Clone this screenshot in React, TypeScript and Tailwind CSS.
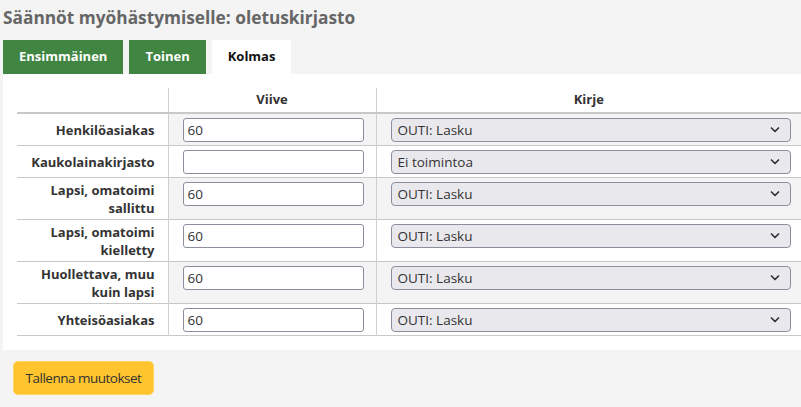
import React from "react";

const rows = [
  { label: ["Henkilöasiakas"], delay: "60", letter: "OUTI: Lasku" },
  { label: ["Kaukolainakirjasto"], delay: "", letter: "Ei toimintoa" },
  { label: ["Lapsi, omatoimi", "sallittu"], delay: "60", letter: "OUTI: Lasku" },
  { label: ["Lapsi, omatoimi", "kielletty"], delay: "60", letter: "OUTI: Lasku" },
  { label: ["Huollettava, muu", "kuin lapsi"], delay: "60", letter: "OUTI: Lasku" },
  { label: ["Yhteisöasiakas"], delay: "60", letter: "OUTI: Lasku" },
];

function Chevron() {
  return (
    <svg width="12" height="8" viewBox="0 0 12 8" fill="none">
      <path d="M2.5 2 L6 5.5 L9.5 2" stroke="#333" strokeWidth="1.7" strokeLinecap="round" strokeLinejoin="round" />
    </svg>
  );
}

export default function App() {
  return (
    <div
      className="w-[801px] h-[407px] bg-[#f3f4f3] overflow-hidden text-[13px] text-[#333]"
      style={{ fontFamily: '"Open Sans", "Noto Sans", sans-serif' }}
    >
      <h1 className="pl-[3px] pt-[5px] h-[40px] text-[17.3px] font-bold text-[#666] leading-[26px]">
        Säännöt myöhästymiselle: oletuskirjasto
      </h1>
      <div className="flex pl-[3px] gap-[6px] h-[34px] text-[13px]">
        <div className="bg-[#408541] text-white font-bold px-[16px] flex items-center">Ensimmäinen</div>
        <div className="bg-[#408541] text-white font-bold px-[16px] flex items-center">Toinen</div>
        <div className="bg-white text-[#111] font-bold px-[16px] flex items-center">Kolmas</div>
      </div>
      <div className="ml-[3px] bg-white pl-[14px] pt-[14px] pb-[14px]">
        <table className="w-[784px] table-fixed border-collapse">
          <colgroup>
            <col className="w-[151px]" />
            <col className="w-[208px]" />
            <col className="w-[425px]" />
          </colgroup>
          <thead>
            <tr className="h-[25px] border-b-2 border-[#c8c8c8]">
              <th></th>
              <th className="border-l border-[#cfcfcf] font-bold text-center align-middle">Viive</th>
              <th className="border-l border-[#cfcfcf] font-bold text-center align-middle">Kirje</th>
            </tr>
          </thead>
          <tbody>
            {rows.map((r, i) => {
              const stripe = i % 2 === 0 ? "bg-[#f3f4f3]" : "bg-white";
              return (
                <tr key={i} className="border-b border-[#c8c8c8]">
                  <th className="bg-white text-right font-bold align-middle pr-[13px] pt-[3px] pb-[2px] leading-[18px]">
                    {r.label.map((l, j) => (
                      <div key={j}>{l}</div>
                    ))}
                  </th>
                  <td className={`${stripe} border-l border-[#cfcfcf] align-top pl-[14px] pr-[13px] pt-[4px] pb-[3px]`}>
                    <div className="h-[24px] w-[181px] bg-white border border-[#8e8d9e] rounded-[3px] flex items-center pl-[4px] text-[13.5px] text-[#333]">
                      {r.delay}
                    </div>
                  </td>
                  <td className={`${stripe} border-l border-[#cfcfcf] align-top pl-[14px] pr-[11px] pt-[4px] pb-[3px]`}>
                    <div className="h-[24px] w-[400px] bg-[#e9e8ed] border border-[#8e8d9e] rounded-[4px] flex items-center justify-between pl-[6px] pr-[9px] text-[13.5px] text-[#333]">
                      <span>{r.letter}</span>
                      <Chevron />
                    </div>
                  </td>
                </tr>
              );
            })}
          </tbody>
        </table>
      </div>
      <div className="pl-[13px] pt-[11px]">
        <button className="h-[34px] w-[141px] bg-[#ffc42e] border border-[#ffd35e] rounded-[5px] text-[13.5px] tracking-[-0.5px] text-[#333]">
          Tallenna muutokset
        </button>
      </div>
    </div>
  );
}
